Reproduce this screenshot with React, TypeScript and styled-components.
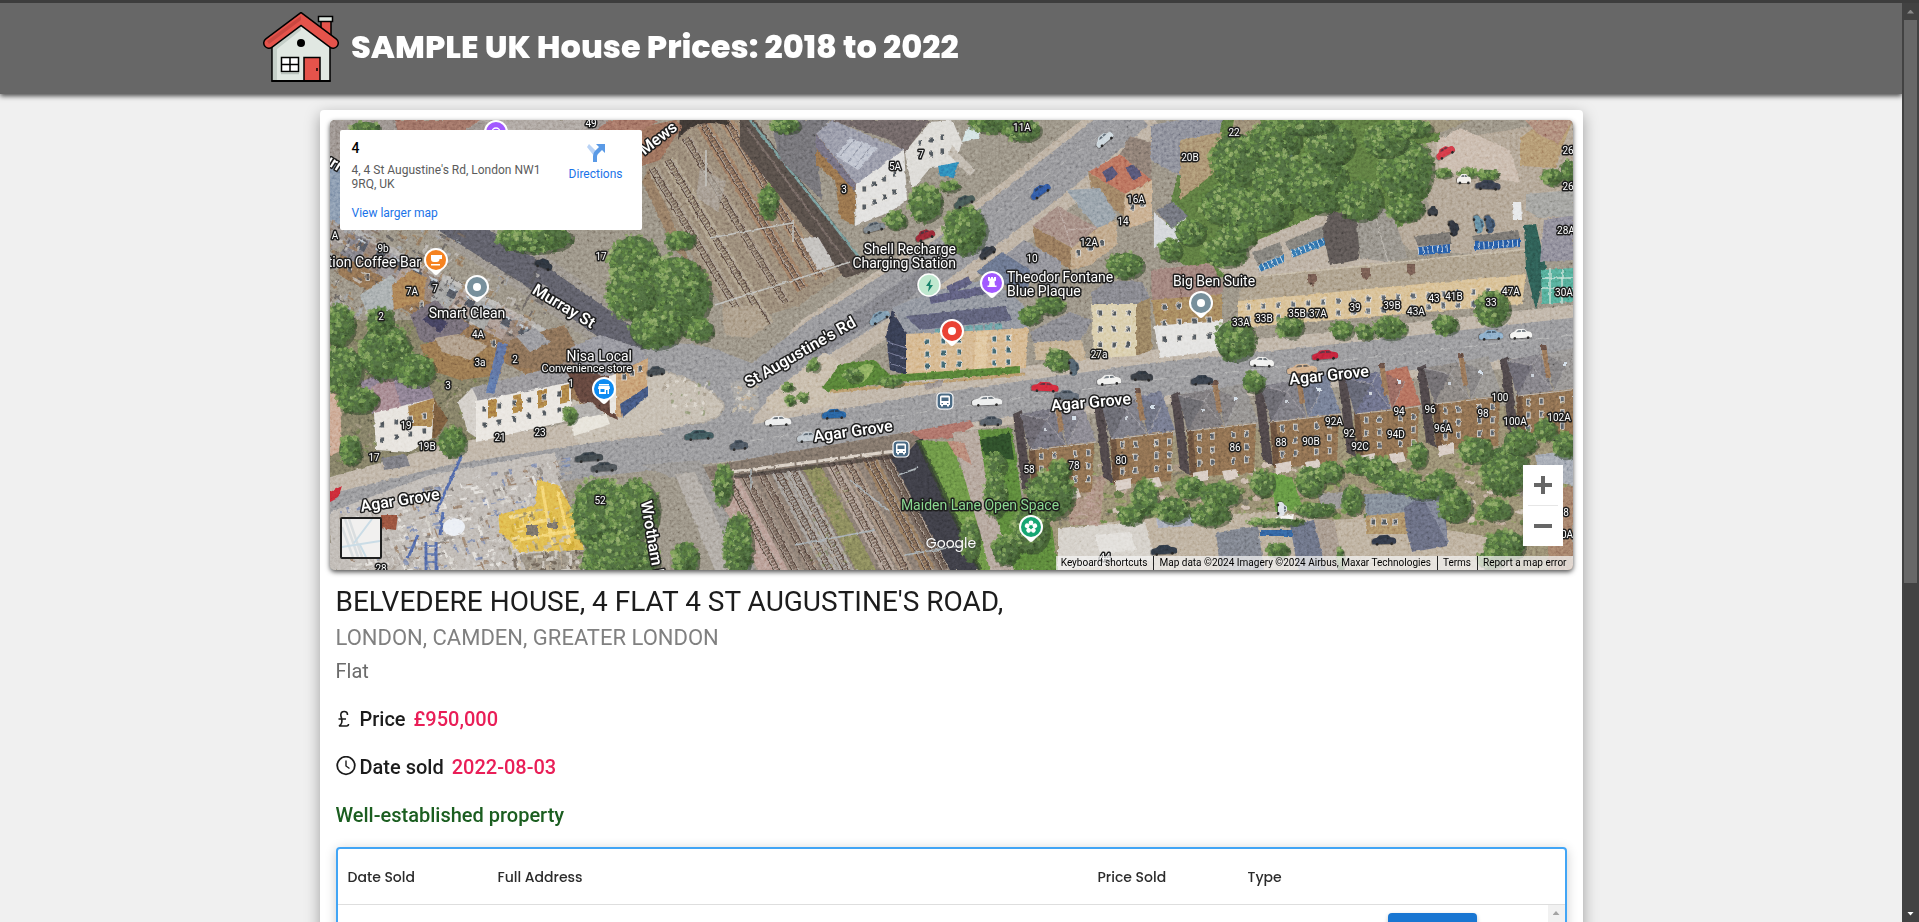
import React from "react";
import styled, { createGlobalStyle } from "styled-components";

const GlobalStyle = createGlobalStyle`
  *, *::before, *::after { box-sizing: border-box; }
  body {
    margin: 0;
    background: #f0f0f0;
    color: #1c1c1c;
    font-family: Roboto, "Liberation Sans", sans-serif;
  }
  h1, h2, h3, p { margin: 0; font-weight: 400; }
`;

const headingFont = `Poppins, Inter, "Liberation Sans", sans-serif`;

/* ---------- page frame ---------- */

const Frame = styled.div`
  display: flex;
  height: 100vh;
  overflow: hidden;
  border-top: 3px solid #3d3d3d;
`;

const Page = styled.div`
  flex: 1;
  min-width: 0;
  overflow: hidden;
`;

const Header = styled.header`
  position: relative;
  padding-bottom: 3px;
  background: #676767;
  box-shadow: 0 2px 5px rgba(0, 0, 0, 0.7);
`;

const HeaderInner = styled.div`
  display: flex;
  align-items: center;
  gap: 12px;
  max-width: 1376px;
  height: 88px;
  margin: 0 auto;
`;

const SiteTitle = styled.h1`
  color: #fff;
  font-family: ${headingFont};
  font-size: 32px;
  font-weight: 800;
  line-height: 48px;
`;

const Card = styled.main`
  max-width: 1263px;
  margin: 16px auto 0;
  padding: 10px;
  background: #fff;
  border-radius: 4px;
  box-shadow: 0 5px 15px rgba(0, 0, 0, 0.35);
`;

/* ---------- window scrollbar ---------- */

const Scrollbar = styled.div`
  display: flex;
  flex-direction: column;
  align-items: center;
  width: 17px;
  background: #424242;
`;

const Arrow = styled.i<{ $up?: boolean; $color: string }>`
  width: 7px;
  height: 4px;
  background: ${(p) => p.$color};
  clip-path: ${(p) => (p.$up ? "polygon(50% 0, 100% 100%, 0 100%)" : "polygon(0 0, 100% 0, 50% 100%)")};
`;

const ArrowBox = styled.div`
  display: flex;
  align-items: center;
  justify-content: center;
  width: 17px;
  height: 17px;
`;

const ScrollTrack = styled.div`
  flex: 1;
`;

const ScrollThumb = styled.div`
  width: 13px;
  height: 63.6%;
  background: #686868;
`;

/* ---------- map chrome ---------- */

const MapFrame = styled.section`
  position: relative;
  height: 450px;
  overflow: hidden;
  border-radius: 5px;
`;

const MapShadow = styled.div`
  border-radius: 5px;
  box-shadow: 0 2px 5px rgba(0, 0, 0, 0.7);
`;

const MapCanvas = styled.svg`
  display: block;
  width: 100%;
  height: 100%;
`;

const Grain = styled.rect`
  mix-blend-mode: overlay;
`;

const PlaceCard = styled.div`
  position: absolute;
  top: 10px;
  left: 10px;
  display: flex;
  justify-content: space-between;
  width: 302px;
  height: 100px;
  padding: 10px 12px;
  background: #fff;
  border-radius: 2px;
  font-size: 12px;
  line-height: 14px;
`;

const PlaceInfo = styled.div`
  width: 200px;
`;

const PlaceName = styled.h2`
  color: #000;
  font-size: 14px;
  font-weight: 500;
  line-height: 16px;
`;

const PlaceAddress = styled.p`
  margin: 7px 0 15px;
  color: #5b5b5b;
`;

const MapLink = styled.a`
  color: #1a73e8;
  text-decoration: none;
`;

const DirectionsLink = styled(MapLink)`
  display: flex;
  flex-direction: column;
  align-items: center;
  gap: 5px;
  padding: 4px 7px 0;
`;

const ZoomControls = styled.div`
  position: absolute;
  right: 10px;
  bottom: 24px;
  display: flex;
  flex-direction: column;
  align-items: center;
  width: 40px;
  background: #fff;
`;

const ZoomButton = styled.button`
  display: flex;
  align-items: center;
  justify-content: center;
  width: 40px;
  height: 40px;
  padding: 0;
  border: 0;
  background: none;
`;

const ZoomDivider = styled.div`
  width: 30px;
  height: 1px;
  background: #e6e6e6;
`;

const LayerButton = styled.button`
  position: absolute;
  left: 10px;
  bottom: 11px;
  width: 42px;
  height: 42px;
  padding: 0;
  border: 2px solid #1f1f1f;
  border-radius: 2px;
  background: #f1f0ef;
  overflow: hidden;
`;

const Attribution = styled.div`
  position: absolute;
  right: 0;
  bottom: 0;
  display: flex;
  background: rgba(245, 245, 245, 0.72);
  color: #000;
  font-size: 10px;
  line-height: 14px;
  white-space: nowrap;
`;

const AttributionItem = styled.span`
  padding: 0 6px 0 5px;
  & + & { border-left: 1px solid #222; }
`;

const AttributionButton = styled.button`
  padding: 0;
  border: 0;
  background: none;
  color: inherit;
  font: inherit;
`;

const AttributionLink = styled.a`
  color: inherit;
  text-decoration: none;
`;

const GoogleMark = styled.div`
  position: absolute;
  left: 50%;
  bottom: 18px;
  transform: translateX(-50%);
  color: #fff;
  font-family: ${headingFont};
  font-size: 14px;
  line-height: 18px;
  text-shadow: 0 0 2px #333;
`;

/* ---------- property details ---------- */

const Details = styled.section`
  padding: 16px 6px;
`;

const Address = styled.h2`
  font-size: 28px;
  line-height: 32px;
`;

const Area = styled.h3`
  margin-top: 8px;
  color: #808080;
  font-size: 22px;
  line-height: 24px;
`;

const Kind = styled.p`
  margin-top: 9px;
  color: #6b6b6b;
  font-size: 20px;
  line-height: 24px;
`;

const Fact = styled.p<{ $color?: string }>`
  display: flex;
  align-items: center;
  height: 24px;
  margin-top: 24px;
  color: ${(p) => p.$color || "#1c1c1c"};
  font-size: 20px;
  font-weight: 500;
  line-height: 24px;
`;

const FactIcon = styled.span`
  display: flex;
  width: 24px;
`;

const FactValue = styled.span`
  margin-left: 8px;
  color: #e91e57;
`;

const TableBox = styled.div`
  height: 420px;
  margin-top: 20px;
  border: 2px solid #42a5f5;
  border-radius: 4px;
  box-shadow: 0 2px 12px rgba(0, 0, 0, 0.2);
`;

const HeadTable = styled.table`
  width: 100%;
  table-layout: fixed;
  border-collapse: collapse;
  border-bottom: 1px solid #dedede;
`;

const HeadCell = styled.th<{ $width?: number }>`
  width: ${(p) => (p.$width ? p.$width + "px" : "auto")};
  height: 55px;
  padding: 2px 10px 0;
  color: #2b2b2b;
  font-family: ${headingFont};
  font-size: 14px;
  font-weight: 500;
  text-align: left;
`;

const TableBody = styled.div`
  display: flex;
  height: 360px;
`;

const Row = styled.div`
  flex: 1;
  display: flex;
  justify-content: flex-end;
  align-items: flex-start;
  padding: 8px 71px 0 0;
`;

const DetailButton = styled.button`
  width: 89px;
  height: 38px;
  border: 0;
  border-radius: 4px;
  background: #1976d2;
  box-shadow: 0 2px 4px rgba(0, 0, 0, 0.25);
`;

const InnerScrollbar = styled.div`
  width: 17px;
  background: #f1f1f1;
`;

/* ---------- aerial drawing ---------- */

const rng = (seed: number) => () => {
  seed = (seed * 16807) % 2147483647;
  return seed / 2147483647;
};

const leafShade = ["#34492a", "#3d5530", "#465f36"];
const leafLight = ["#56753c", "#648546", "#739352", "#4f6d39", "#86a362"];

const Tree = ({ x, y, rx, ry }: { x: number; y: number; rx: number; ry: number }) => {
  const r = rng(Math.round(x * 91 + y * 37 + rx * 13 + 7));
  r();
  const count = Math.round((rx * ry) / 4) + 14;
  return (
    <g>
      <ellipse cx={x + 2} cy={y + 2} rx={rx * 0.95} ry={ry * 0.95} fill="#2c3a26" opacity={0.55} />
      <ellipse cx={x} cy={y} rx={rx * 0.9} ry={ry * 0.9} fill="#48643a" />
      {Array.from({ length: count }, (_, i) => {
        const a = r() * 6.283;
        const d = Math.sqrt(r());
        const px = Math.cos(a) * d;
        const py = Math.sin(a) * d;
        const shades = px + py + (r() - 0.5) * 1.4 > 0.35 ? leafShade : leafLight;
        return (
          <circle
            key={i}
            cx={x + px * rx}
            cy={y + py * ry}
            r={0.8 + r() * 1.8}
            fill={shades[Math.floor(r() * shades.length)]}
            opacity={0.75}
          />
        );
      })}
    </g>
  );
};

const trees = [
  [12, 250, 22, 26], [8, 205, 18, 22], [55, 232, 28, 30], [85, 250, 22, 18], [28, 280, 22, 14], [50, 200, 14, 14],
  [205, 118, 40, 16], [305, 145, 28, 32], [345, 175, 38, 42], [300, 175, 26, 26], [325, 210, 28, 20], [350, 120, 16, 10], [370, 210, 14, 12],
  [35, 8, 16, 7], [122, 322, 15, 16], [20, 330, 12, 16], [240, 295, 7, 9],
  [270, 395, 30, 40], [305, 390, 26, 32], [290, 440, 42, 26], [355, 440, 14, 20],
  [393, 365, 10, 22], [408, 425, 16, 34],
  [595, 83, 18, 20], [635, 110, 23, 26], [660, 0, 24, 14], [692, 10, 20, 12], [620, 66, 10, 6], [438, 82, 10, 18], [455, 5, 16, 9], [565, 100, 12, 10],
  [905, 40, 26, 30], [945, 20, 28, 22], [950, 62, 30, 30], [900, 85, 32, 22], [990, 62, 30, 34], [930, 92, 34, 20], [1000, 24, 26, 22], [1030, 80, 24, 22],
  [1075, 50, 30, 34], [1055, 20, 24, 18], [1075, 88, 20, 14], [975, 5, 30, 10], [1080, 8, 24, 10], [895, 132, 24, 16], [860, 112, 16, 14], [905, 118, 22, 14], [840, 130, 12, 12],
  [1113, 53, 9, 5], [1138, 53, 10, 5], [1157, 55, 12, 6], [1222, 57, 12, 9], [1238, 50, 8, 12],
  [795, 145, 20, 14], [720, 185, 16, 10], [700, 195, 12, 10],
  [1162, 188, 19, 19], [960, 207, 14, 12], [1012, 210, 12, 10], [1060, 208, 18, 12], [905, 220, 22, 22], [1115, 205, 14, 10], [1035, 212, 10, 8],
  [460, 280, 6, 5], [458, 267, 6, 4], [473, 277, 5, 5], [484, 245, 6, 7], [728, 240, 14, 12], [523, 255, 10, 8], [560, 262, 14, 5],
  [666, 345, 11, 13], [665, 375, 12, 24], [720, 375, 26, 26], [700, 410, 20, 24], [675, 430, 14, 16], [640, 420, 10, 22], [730, 350, 12, 10],
  [923, 262, 12, 11], [860, 368, 16, 12], [890, 375, 22, 14], [932, 363, 13, 14], [880, 395, 22, 12],
  [980, 362, 16, 16], [1000, 352, 14, 12], [1028, 345, 14, 10], [1050, 350, 18, 14], [1070, 362, 22, 12], [1088, 335, 10, 14],
  [1110, 362, 16, 12], [1095, 370, 24, 10], [1125, 385, 18, 18], [1175, 350, 26, 26], [1145, 330, 18, 14], [1190, 322, 18, 14], [1215, 310, 12, 12], [1235, 325, 14, 14],
  [1165, 390, 18, 12], [1175, 425, 22, 16], [1160, 440, 14, 10], [1022, 380, 12, 16], [985, 390, 22, 8], [945, 402, 30, 4], [815, 378, 14, 20], [800, 395, 14, 10], [842, 390, 18, 14], [1010, 440, 4, 14], [948, 430, 12, 8],
];

/* A pair of hipped Victorian houses seen from the rear, with its shaded gap on the left. */
const VillaPair = ({ x, y, w, roof, roof2 }: { x: number; y: number; w: number; roof: string; roof2: string }) => (
  <g transform={`translate(${x} ${y})`}>
    <path d="M-7 6 L2 2 L12 86 L2 80Z" fill="#474142" />
    <path d={`M9 40 L${w} 34 L${w - 2} 84 L13 88Z`} fill="#806549" />
    <path d="M9 40 L15 41 L19 88 L12 86Z" fill="#5f4a38" />
    <path d="M0 6 L34 0 L46 37 L10 42Z" fill={roof} />
    <path d="M0 6 L26 12 L10 42Z" fill="#55535a" opacity={0.6} />
    <path d={`M38 0 L${w - 12} -6 L${w + 2} 33 L47 37Z`} fill={roof2} />
    <path d="M38 0 L60 10 L47 37Z" fill="#5b5960" opacity={0.4} />
    <path d="M0 6 L26 12 L46 37 M26 12 L34 0 M60 10 L47 37" stroke="#a3a0a2" strokeWidth={0.7} fill="none" opacity={0.7} />
    <path d="M34 -9 l5 0 l5 32 l-5 1z" fill="#8a6a50" />
    <path d="M34 -9 l5 0 l1 5 l-6 0z" fill="#5f4a3f" />
    <path d={`M10 42 L47 38 L${w + 2} 34`} stroke="#b7aca0" strokeWidth={1} fill="none" />
    {[0, 1, 2].map((row) =>
      [19, 32, 53, 66].map((c) => (
        <g key={row + "-" + c}>
          <rect x={c} y={46 - c / 14 + row * 13} width={4.6} height={7} fill="#d2ccc3" />
          <rect x={c + 0.8} y={47 - c / 14 + row * 13} width={3} height={5} fill="#515860" />
        </g>
      ))
    )}
    <path d="M14 84 l16 -3 l0 10 l-15 3z M44 82 l14 -2 l3 9 l-14 3z" fill="#d3c6bd" />
    <rect x={w - 22} y={8} width={4} height={4} fill="#cfdbe6" />
    <rect x={24} y={20} width={3} height={3} fill="#c5ccd4" />
  </g>
);

const Facade = ({ x, y, cols, rows, dx, dy, skew = 0, fill = "#4b5157", frame = "#e6e2da" }: {
  x: number; y: number; cols: number; rows: number; dx: number; dy: number; skew?: number; fill?: string; frame?: string;
}) => (
  <g>
    {Array.from({ length: cols * rows }, (_, i) => {
      const c = i % cols;
      const r = Math.floor(i / cols);
      return <rect key={i} x={x + c * dx} y={y + r * dy + c * skew} width={4.6} height={6} fill={fill} stroke={frame} strokeWidth={0.8} />;
    })}
  </g>
);

const Tracks = ({ lines, dx, dy }: { lines: [number, number, string][]; dx: number; dy: number }) => (
  <g>
    {lines.map(([x, y, c], i) => (
      <g key={i}>
        <path d={`M${x} ${y} l${dx} ${dy}`} stroke={c} strokeWidth={13} />
        <path d={`M${x} ${y} l${dx} ${dy}`} stroke="#5d5047" strokeWidth={7} strokeDasharray="1.8 1.4" opacity={0.75} />
        <path d={`M${x - 2.6} ${y + 1} l${dx} ${dy} M${x + 2.6} ${y - 1} l${dx} ${dy}`} stroke="#4a3b34" strokeWidth={1.7} />
        <path d={`M${x - 2} ${y + 1} l${dx} ${dy} M${x + 3.2} ${y - 1} l${dx} ${dy}`} stroke="#c9beb2" strokeWidth={0.7} />
      </g>
    ))}
  </g>
);

const Car = ({ x, y, a, c, l = 22 }: { x: number; y: number; a: number; c: string; l?: number }) => (
  <g transform={`translate(${x} ${y}) rotate(${a})`}>
    <rect x={-l / 2 - 1} y={-2} width={l + 1} height={7} rx={3} fill="#333" opacity={0.5} />
    <path d={`M${-l / 2} 0 q1 -2 ${l / 5} -2.500 l${l / 8} -2.500 h${l / 3} l${l / 8} 2.500 q${l / 5} 0 ${l / 4.6} 3 v2 q0 1.500 -1.500 1.500 h${-l + 3} q-1.500 0 -1.500 -1.500z`} fill={c} />
    <path d={`M${-l / 4.5} -2 l${l / 10} -2 h${l / 8} v2z M${l / 20} -2 v-2 h${l / 9} l${l / 12} 2z`} fill="#27313b" opacity={0.7} />
    <circle cx={-l / 3.4} cy={4} r={1.4} fill="#222" />
    <circle cx={l / 3.2} cy={4} r={1.4} fill="#222" />
  </g>
);

const cars: [number, number, number, string, number?][] = [
  [448, 301, -3, "#eceded", 26], [504, 294, -3, "#245a96", 24], [478, 317, -5, "#b9c2c9", 22], [409, 325, -6, "#47505a", 18],
  [657, 281, -2, "#eceded", 30], [715, 267, 2, "#cf2636", 27], [737, 275, 2, "#59616b", 24], [661, 301, -2, "#4f565e", 22],
  [779, 260, -4, "#f0f0ee", 24], [812, 256, 2, "#33373d", 22], [932, 242, 2, "#f0f0ee", 24], [872, 260, -3, "#333a44", 22],
  [995, 235, -5, "#bd2036", 26], [972, 249, -4, "#d0a880", 30], [1161, 215, -3, "#7da3c4", 24], [1191, 214, -3, "#f4f4f2", 22],
  [369, 315, -4, "#3a5155", 29], [259, 337, -5, "#3b4246", 28], [274, 347, -4, "#454a4e", 26], [326, 251, -8, "#3e4448", 18],
  [710, 71, -35, "#2b5097", 22], [634, 81, -25, "#3f4f4c", 22], [774, 19, -40, "#c7d3da", 20], [595, 115, -20, "#8d2430", 20],
  [544, 107, -15, "#70777c", 22], [549, 197, -30, "#7390a8", 22], [657, 132, -35, "#30343b", 18], [214, 144, 20, "#2a3038", 18],
  [1115, 32, -30, "#cf3440", 20], [1158, 65, 2, "#353a46", 25], [1103, 91, 3, "#33373d", 10], [1134, 59, 0, "#f1eeea", 14],
  [1124, 108, 75, "#2c3038", 16], [1149, 104, 78, "#5c829a", 18], [1160, 104, 78, "#3c4f66", 18], [744, 247, 80, "#4c5b66", 17],
  [834, 430, -4, "#2c3540", 26], [1054, 420, -2, "#2d3442", 24], [952, 389, 88, "#d8dde4", 14],
];

const numbers: [string, number, number][] = [
  ["49", 261, 3], ["A", 5, 115], ["9b", 53, 128], ["7A", 82, 171], ["7", 105, 168], ["2", 51, 196], ["4A", 148, 214], ["17", 271, 136],
  ["11A", 692, 7], ["7", 591, 34], ["5A", 565, 46], ["3", 514, 69], ["16A", 806, 79], ["14", 793, 101], ["12A", 759, 122], ["10", 702, 138],
  ["22", 904, 12], ["20B", 860, 37], ["26", 1238, 30], ["26", 1238, 66], ["28A", 1236, 110], ["30A", 1234, 172], ["47A", 1181, 171],
  ["33", 1161, 182], ["41B", 1124, 176], ["43", 1104, 178], ["43A", 1086, 191], ["39B", 1062, 185], ["39", 1025, 187], ["37A", 988, 193],
  ["35B", 967, 193], ["33B", 934, 198], ["33A", 911, 202], ["3a", 150, 242], ["2", 185, 239], ["3", 118, 265], ["19", 76, 305],
  ["21", 170, 317], ["23", 210, 312], ["19B", 97, 326], ["17", 44, 337], ["1", 241, 263], ["52", 270, 380], ["28", 51, 448],
  ["27a", 769, 234], ["58", 699, 349], ["78", 744, 345], ["80", 791, 340], ["44", 775, 437], ["86", 905, 327], ["88", 951, 322],
  ["90B", 981, 321], ["92A", 1004, 301], ["92", 1019, 313], ["92C", 1030, 326], ["94", 1069, 291], ["94D", 1066, 314], ["96", 1100, 289],
  ["96A", 1113, 308], ["98", 1153, 293], ["100", 1170, 277], ["100A", 1185, 301], ["102A", 1229, 297], ["8", 1236, 392], ["0A", 1237, 414],
];

const MapText = styled.text<{ $size: number; $weight?: number; $fill?: string }>`
  font-family: Roboto, sans-serif;
  font-size: ${(p) => p.$size}px;
  font-weight: ${(p) => p.$weight || 400};
  fill: ${(p) => p.$fill || "#fff"};
  stroke: #1d1d1d;
  stroke-width: 3px;
  stroke-linejoin: round;
  paint-order: stroke;
  dominant-baseline: central;
`;

const streets: [string, number, number, number][] = [
  ["Murray St", 234, 186, 31], ["Mews", 328, 18, -38], ["urr", 3, 42, 32], ["Agar Grove", 523, 311, -8], ["Agar Grove", 761, 282, -5],
  ["Agar Grove", 999, 255, -6], ["Agar Grove", 70, 380, -9], ["St Augustine's Rd", 470, 232, -30], ["Wrotham R", 323, 420, 80],
];

const places: [string, number, number, "start" | "middle" | "end", number?, string?][] = [
  ["tion Coffee Bar", 91, 142, "end"], ["Smart Clean", 137, 193, "middle"], ["Shell Recharge", 626, 129, "end"], ["Charging Station", 626, 143, "end"],
  ["Theodor Fontane", 677, 157, "start"], ["Blue Plaque", 677, 171, "start"], ["Big Ben Suite", 884, 161, "middle"],
  ["Nisa Local", 302, 236, "end"], ["Convenience store", 302, 248, "end", 11], ["Maiden Lane Open Space", 650, 385, "middle", 14, "#8bd891"],
];

const Pin = ({ x, y, color, children }: { x: number; y: number; color: string; children?: React.ReactNode }) => (
  <g transform={`translate(${x} ${y})`}>
    <path d="M-12 0 a12 12 0 1 1 24 0 c0 5 -3 8 -7 11 l-3 3 q-2 2 -4 0 l-3 -3 c-4 -3 -7 -6 -7 -11z" fill="#fff" />
    <circle r={10} fill={color} />
    {children}
  </g>
);

const BusStop = ({ x, y }: { x: number; y: number }) => (
  <g transform={`translate(${x} ${y})`}>
    <rect x={-8} y={-8} width={16} height={16} rx={4} fill="#4a6a84" stroke="#fff" strokeWidth={1.2} />
    <path d="M-5 -4 q0 -1.500 1.500 -1.500 h7 q1.500 0 1.500 1.500 v8 h-1 v1.500 h-2 v-1.500 h-4 v1.500 h-2 v-1.500 h-1z" fill="#fff" />
    <path d="M-3.500 -3.500 h7 v3.500 h-7z M-3.500 2 h1.500 v1 h-1.500z M2 2 h1.500 v1 h-1.500z" fill="#4a6a84" />
  </g>
);

const TerraceRoofs = () => {
  const r = rng(4242);
  const roofColors = ["#77757b", "#8a8487", "#6a686e", "#a08d84", "#9a9a98", "#85756c"];
  return (
    <g>
      {Array.from({ length: 15 }, (_, i) => {
        const x = 16 + i * 18;
        const y = 112 + i * 9.500;
        if (x > 262) return null;
        return (
          <g key={i} transform={`translate(${x} ${y})`}>
            <path d="M-6 22 L8 -4 L34 8 L22 38Z" fill={roofColors[Math.floor(r() * 6)]} />
            <path d="M-6 22 L22 38 L20 58 L-8 42Z" fill="#85684c" />
            <path d="M8 -4 L34 8 L32 12 L6 1Z" fill="#c2bfbb" opacity={0.6} />
            <path d="M34 8 L22 38" stroke="#4d4a4c" strokeWidth={1.2} />
            <rect x={2} y={32} width={3.5} height={7} fill="#454a50" stroke="#d8d2c8" strokeWidth={0.8} />
            <rect x={12} y={38} width={3.5} height={7} fill="#454a50" stroke="#d8d2c8" strokeWidth={0.8} />
            <path d="M14 8 l8 4 l-4 8 l-8 -4z" fill="#4b5059" />
            <path d="M12 6 l8 4 l-1 2 l-8 -4z" fill="#b9c4cf" />
          </g>
        );
      })}
    </g>
  );
};

/* Small skewed chips that break up a large flat area. */
const Chips = ({ seed, n, x, y, w, h, colors, angle, size = 8, opacity = 0.6 }: {
  seed: number; n: number; x: number; y: number; w: number; h: number; colors: string[]; angle: number; size?: number; opacity?: number;
}) => {
  const r = rng(seed);
  r();
  return (
    <g opacity={opacity}>
      {Array.from({ length: n }, (_, i) => {
        const px = x + r() * w;
        const py = y + r() * h;
        const turn = r() > 0.5 ? angle : angle + 90;
        return (
          <rect
            key={i} x={px} y={py} width={1.500 + r() * size} height={1 + r() * 2.500}
            transform={`rotate(${turn} ${px} ${py})`} fill={colors[Math.floor(r() * colors.length)]}
          />
        );
      })}
    </g>
  );
};

const Rubble = () => {
  const r = rng(777);
  const c = ["#d9d6d1", "#b9b2ab", "#9b938c", "#8a6f5b", "#c9c6c2", "#76706b", "#e8e5e0", "#6d7da8", "#d0ccc6", "#a79d94"];
  return (
    <g>
      {Array.from({ length: 900 }, (_, i) => {
        const y = 335 + r() * 115;
        const x = r() * 232 + (y - 335) * 0.16;
        const w = 1.500 + r() * 9;
        const h = 0.8 + r() * 2.6;
        const turn = r() > 0.5 ? -10 : 68;
        const fill = c[Math.floor(r() * c.length)];
        if (y < 388 - x * 0.22) return null;
        return <rect key={i} x={x} y={y} width={w} height={h} transform={`rotate(${turn} ${x} ${y})`} fill={fill} opacity={0.85} />;
      })}
    </g>
  );
};

const gardenPatches = (() => {
  const r = rng(991);
  r();
  const c = ["#7c8a55", "#a08a78", "#5b7a3c", "#c4aa9b", "#6f6a5f", "#8b7c66", "#4d6636", "#d6c2b6"];
  return Array.from({ length: 420 }, (_, i) => (
    <ellipse key={i} cx={700 + r() * 543} cy={345 + r() * 60} rx={1.500 + r() * 5} ry={1 + r() * 3} fill={c[Math.floor(r() * c.length)]} opacity={0.8} />
  ));
})();

const Terrain = () => (
  <g>
    <rect width={1243} height={450} fill="#8e8679" />

    {/* open ground and gardens */}
    <path d="M0 200 L120 200 L190 300 L120 350 L0 360Z" fill="#77735c" />
    <Chips seed={31} n={260} x={0} y={190} w={150} h={150} angle={30} colors={["#5b6b3c", "#8c7f6a", "#494c3a", "#a39480", "#6f7f4a"]} />
    <path d="M860 0 H1110 V60 L1060 120 L880 160 L830 130Z" fill="#55703a" />
    <path d="M1085 25 L1243 0 V140 L1080 130 L1060 112 L1100 90Z" fill="#a99b89" />
    <path d="M1105 22 L1130 8 L1180 30 L1190 62 L1110 52Z" fill="#c4b3a4" />
    <path d="M880 140 L1000 90 L1060 130 L1060 150 L905 165Z" fill="#b3a697" />
    <path d="M690 330 L1243 280 V450 H700Z" fill="#8c8168" />
    {gardenPatches}
    <path d="M815 398 L945 392 L1000 400 L1040 398 L1180 420 V450 H720 L760 405Z" fill="#b5a793" />

    {/* railway cutting, north */}
    <path d="M345 0 H420 L530 142 L470 185 L405 205 L375 160 L315 50Z" fill="#8c7c6c" />
    <Tracks dx={100} dy={165} lines={[[322, 48, "#9d8f7c"], [338, 40, "#a59780"], [356, 18, "#9b8a78"], [373, 4, "#94735c"], [391, -8, "#9a7a63"], [406, -20, "#8f7a68"]]} />
    <path d="M318 50 L338 90 L360 142 L345 130 L312 62Z" fill="#876f5a" />
    <path d="M410 0 L424 0 L540 150 L515 158 L410 26Z" fill="#4f4643" />
    <path d="M416 6 L524 152" stroke="#6a5f5a" strokeWidth={2} />
    <path d="M420 0 L536 146" stroke="#6d9190" strokeWidth={2.500} />
    <path d="M370 48 L396 62 L388 92 L366 78Z" fill="#a39d92" opacity={0.6} />
    <path d="M380 118 L462 103 M385 185 L520 142 M463 100 V122 M376 30 V66" stroke="#b9b9b4" strokeWidth={1.500} fill="none" />
    <path d="M470 118 L488 117 L505 145 L488 150Z" fill="#bcb9b5" />
    <path d="M348 20 Q365 -4 400 6 L396 -2 H350Z" fill="#39322f" />
    <path d="M250 20 L345 0 L352 6 L330 40 L300 50Z" fill="#8f6653" />
    <path d="M392 188 L428 185 L438 205 L420 218 L395 215Z" fill="#a1917c" />

    {/* roads */}
    <g fill="none" strokeLinejoin="round">
      <path d="M440 290 L490 225 L590 160 L690 88 L770 25 L815 -12" stroke="#b5a898" strokeWidth={62} />
      <path d="M110 95 L200 152 L300 222 L360 262" stroke="#8f8880" strokeWidth={44} />
      <path d="M-20 392 L120 352 L260 328 L420 312 L600 287 L821 258 L1000 240 L1260 211" stroke="#b8ac9d" strokeWidth={56} />
      <path d="M110 95 L200 152 L300 222 L360 262" stroke="#57575e" strokeWidth={28} />
      <path d="M-20 396 L120 362 L260 340 L420 322 L600 291 L821 260 L1000 242 L1260 213" stroke="#8d8d90" strokeWidth={34} />
      <path d="M390 305 L420 270 L490 217 L590 155 L690 83 L770 20 L805 -10" stroke="#8a8a8e" strokeWidth={40} />
      <path d="M480 232 L600 153" stroke="#6f6f75" strokeWidth={18} opacity={0.7} />
      <path d="M420 321 L600 291 L821 260 L1000 242 L1260 213" stroke="#adadad" strokeWidth={1} strokeDasharray="14 10" />
      <path d="M500 205 L600 140 L700 68 L790 0" stroke="#aaaaaa" strokeWidth={0.8} strokeDasharray="8 12" />
    </g>
    <path d="M300 235 Q350 212 400 235 L440 250 L420 310 L340 318 L300 290Z" fill="#8d8d90" />
    <path d="M238 282 L330 250 Q378 262 394 285 Q396 300 360 304 L250 325 L240 312Z" fill="#beb5a7" />
    <path d="M330 250 Q378 262 394 285 Q396 300 360 304" fill="none" stroke="#a29a8e" strokeWidth={1.500} />
    <path d="M440 275 Q470 250 495 232 L520 250 L505 285 L445 293 Q430 285 440 275Z" fill="#c1b4a1" />
    <path d="M400 262 L425 258 L430 290 L408 292Z" fill="#a8a59f" opacity={0.6} />
    <Chips seed={55} n={26} x={402} y={262} w={22} h={28} angle={15} size={4} colors={["#d4c39f", "#e6e1d8", "#c9ad86"]} />
    <Chips seed={57} n={30} x={335} y={258} w={46} h={34} angle={15} size={4} colors={["#6b7d4e", "#e6e1d8", "#8c7f6c"]} />
    <path d="M580 312 L640 300 L644 306 L622 318 L582 320Z" fill="#a3685e" />

    {/* railway, south */}
    <path d="M375 352 L588 322 L664 450 H428Z" fill="#7c7167" />
    <path d="M375 352 L412 348 L470 450 H428Z" fill="#b0938a" />
    <Tracks dx={62} dy={116} lines={[[400, 362, "#b0938a"], [414, 354, "#8a7a70"], [430, 350, "#83746a"], [446, 348, "#9a9590"], [461, 346, "#a09b96"], [500, 340, "#a8968a"], [516, 338, "#9a8474"], [537, 335, "#8a6f56"], [553, 333, "#6b5d54"]]} />
    <path d="M472 346 L490 344 L546 450 H526Z" fill="#7b7c52" />
    <Chips seed={81} n={90} x={480} y={350} w={40} h={98} angle={60} size={5} colors={["#8f9460", "#a3836a", "#5c6b3b", "#b39c86"]} opacity={0.45} />
    <path d="M558 332 L592 318 L664 450 H620Z" fill="#38383f" />
    <path d="M370 348 L440 335 L578 312 L590 318 L578 332 L401 358 L371 360Z" fill="#756a61" />
    <path d="M401 352 L574 330" stroke="#d6cbbe" strokeWidth={3} strokeDasharray="20 2" />
    <path d="M405 357 L574 335" stroke="#3c3432" strokeWidth={4} opacity={0.7} />
    <path d="M465 425 L545 410 M575 435 L665 420 M421 350 V370 M520 360 L560 392 M568 355 L588 348" stroke="#9da6ab" strokeWidth={1.500} />

    {/* park and footpath */}
    <path d="M588 320 L622 322 L642 380 L662 450 H650Z" fill="#64893f" />
    <path d="M622 312 L650 310 L668 400 L684 450 H660Z" fill="#ab9b90" />
    <path d="M648 310 L682 308 L692 380 L722 407 L728 450 H684 L660 380Z" fill="#527a36" />
    <path d="M650 320 L680 312 L684 340 L655 335Z" fill="#2c4726" />
    <path d="M617 321 L634 322 L642 345 L625 335Z" fill="#b07d6e" />
    <path d="M588 320 L650 450" stroke="#2e3d26" strokeWidth={5} opacity={0.7} />

    {/* road, verge and wall beside the southern line, west bank */}
    <path d="M310 345 L370 340 L425 450 H395 L350 360Z" fill="#8d8a87" />
    <path d="M345 354 L365 352 L410 450 H385Z" fill="#a7a19a" />

    {/* north-west terraces */}
    <path d="M0 0 H330 L240 40 L0 130Z" fill="#8f8681" />
    <path d="M65 0 L150 0 L130 14 L70 22Z" fill="#93685b" />
    <path d="M280 0 L330 0 L280 30 L260 14Z" fill="#9a6a5c" />
    <path d="M150 0 L260 0 L255 10 L190 14Z" fill="#a39b95" />
    <path d="M0 40 L14 48 L10 105 L0 100Z" fill="#7c8ea6" />
    <TerraceRoofs />
    <Chips seed={12} n={240} x={0} y={100} w={130} h={90} angle={28} colors={["#c3beb9", "#4c4a4c", "#8a6a4d", "#9aa0a8", "#6c5d50"]} opacity={0.7} />
    <Chips seed={14} n={90} x={130} y={150} w={90} h={70} angle={28} colors={["#c3beb9", "#4c4a4c", "#8a6a4d", "#9aa0a8"]} opacity={0.6} />
    <path d="M30 175 L60 155 L75 168 L62 190 L36 190Z" fill="#9fa5a6" />
    <path d="M62 165 L82 150 L96 158 L94 180 L64 190Z" fill="#a1764e" />
    <path d="M80 195 L105 180 L140 205 L115 228 L90 220Z" fill="#6b636c" />
    <path d="M92 200 L102 192 L118 203 L110 212Z" fill="#3c3a55" />

    {/* white villas along Agar Grove */}
    <path d="M90 225 L130 215 L175 232 L170 255 L130 260 L100 250Z" fill="#8d6d4a" />
    <path d="M104 218 L128 214 L158 226 L140 240 L112 232Z" fill="#a5917c" />
    <path d="M180 220 L235 205 L250 235 L215 252 L178 245Z" fill="#7d6650" />
    <path d="M186 216 L205 208 L220 222 L200 232Z" fill="#8d8d92" />
    <path d="M30 262 L60 250 L92 248 L105 280 L70 290 L42 294Z" fill="#7e7383" />
    <path d="M38 270 L62 255 L72 290 L44 294Z" fill="#9b7b83" />
    <path d="M92 248 L105 280 L118 300 L106 318 L102 318 L104 278Z" fill="#6d5238" />
    <path d="M44 293 L104 278 L102 318 L80 332 L46 330Z" fill="#e4e0da" />
    <path d="M78 286 L104 278 L102 306 L80 306Z" fill="#a0794c" />
    <Facade x={50} y={302} cols={4} rows={2} dx={14} dy={15} skew={-3} />
    <path d="M0 272 L10 275 L12 330 L0 336Z" fill="#c69f88" />
    <path d="M140 268 L232 245 L242 262 L148 282Z" fill="#8b898d" />
    <path d="M128 282 L142 268 L150 284 L150 320 L138 312Z" fill="#cdc8c1" />
    <path d="M146 281 L241 262 L241 300 L146 322Z" fill="#e7e3dd" />
    {[158, 183, 208, 230].map((x) => (
      <path key={x} d={`M${x} ${312 - x * 0.2} l9 -2 v18 l-9 2z`} fill="#a5783f" />
    ))}
    <Facade x={152} y={286} cols={6} rows={2} dx={15} dy={16} skew={-3} />
    <path d="M168 222 L178 224 L164 274 L156 272Z" fill="#4d68a5" opacity={0.85} />

    {/* corner shop */}
    <path d="M240 228 L270 215 L310 228 L318 240 L280 256 L248 250Z" fill="#8a8a92" />
    <path d="M236 250 L280 256 L288 300 L250 282Z" fill="#5a4137" />
    <path d="M280 256 L318 238 L317 268 L290 298 L286 296Z" fill="#c0946b" />
    <path d="M290 284 L318 266 L318 276 L292 298Z" fill="#3c4f74" />
    <path d="M279 256 L286 254 L286 294 L280 292Z" fill="#e6e2dc" />
    <path d="M241 298 L276 294 L280 304 L244 316Z" fill="#e4e0d6" />
    <path d="M243 286 L262 282 L274 294 L242 300Z" fill="#a6a3a0" />
    <Facade x={292} y={254} cols={3} rows={1} dx={8} dy={10} skew={-4} />

    {/* construction site */}
    <path d="M0 392 L100 355 L225 332 L240 420 L255 450 H0Z" fill="#b8b2ac" />
    <Rubble />
    <path d="M50 395 L68 395 L66 410 L50 408Z" fill="#8b4c38" />
    <path d="M168 395 L205 385 L208 360 L228 365 L248 400 L254 430 L190 432 L170 412Z" fill="#dcb347" />
    <path d="M180 398 L205 392 M185 408 L225 398 M190 420 L245 410 M212 366 L222 425 M228 372 L240 425" stroke="#f4d26c" strokeWidth={3} />
    <Chips seed={97} n={70} x={178} y={386} w={66} h={42} angle={-12} size={7} colors={["#8b7f63", "#f0d98c", "#c69a2c", "#b9b2a4"]} opacity={0.8} />
    <path d="M196 405 h12 v10 h-12z M218 402 h10 v6 h-10z" fill="#6e685f" />
    <path d="M190 434 L254 430 L252 450 H196Z" fill="#8e8477" />
    <Chips seed={98} n={50} x={185} y={430} w={66} h={20} angle={-4} size={9} colors={["#d5cfc6", "#5c5248", "#b7a78e"]} opacity={0.8} />
    <g stroke="#4b61a0" strokeWidth={3} fill="none">
      <path d="M132 335 L106 392 M113 392 L110 415 M88 415 L78 438 M96 422 V450 M106 422 V450" />
      <path d="M96 426 H106 M96 434 H106 M96 442 H106" strokeWidth={1.500} />
    </g>
    <ellipse cx={124} cy={407} rx={11} ry={9} fill="#e9edf4" />
    <path d="M0 372 L12 366 L8 378 L0 382Z" fill="#c52631" />
    <path d="M52 338 L76 334 L80 346 L54 350Z" fill="#707076" />

    {/* north side of St Augustine's Road */}
    <path d="M440 0 L500 0 L486 20 L492 80 L450 40Z" fill="#69676c" />
    <path d="M500 0 L600 0 L575 32 L560 20Z" fill="#655c5c" />
    <path d="M486 14 L502 0 L574 30 L530 62 L526 64Z" fill="#8b8d9d" />
    <path d="M520 18 L548 28 L528 50 L506 36Z" fill="#b7bcc9" />
    <path d="M524 20 L510 36 M533 23 L518 42 M541 26 L525 47" stroke="#7d8293" strokeWidth={1} />
    <path d="M486 14 L526 64 L524 105 L510 98 L505 60 L486 45Z" fill="#8a6844" />
    <path d="M486 14 L526 64 L525 72 L486 28Z" fill="#6a6674" />
    <path d="M526 64 L574 30 L577 80 L560 92 L525 106Z" fill="#dedddb" />
    <Facade x={532} y={66} cols={4} rows={2} dx={10} dy={18} skew={-5} />
    <path d="M575 32 L600 2 L622 0 L632 22 L625 46 L600 48 L582 70Z" fill="#d9d7d2" />
    <Facade x={588} y={20} cols={3} rows={2} dx={11} dy={14} skew={-3} />
    <path d="M622 26 L645 50 L640 56 L618 34Z" fill="#b9b1a5" />
    <path d="M608 46 L628 42 L624 58 L610 56Z" fill="#2a7fb2" />
    <path d="M636 10 L645 0 L650 18 L632 22Z" fill="#cfe0e0" />

    {/* houses between the two roads */}
    <path d="M758 52 L790 34 L822 60 L795 74Z" fill="#b26755" />
    <path d="M772 52 l10 -6 l6 8 l-10 8z M796 48 l8 -5 l8 12 l-9 6z" fill="#4d4d6b" />
    <path d="M758 52 L795 74 L794 96 L762 74Z" fill="#93765a" />
    <path d="M795 74 L822 60 L822 100 L800 108 L794 96Z" fill="#c2a583" />
    <Facade x={800} y={84} cols={2} rows={1} dx={10} dy={10} skew={-4} />
    <path d="M790 34 L800 16 L821 22 L822 60Z" fill="#7f7269" />
    <path d="M736 70 L770 68 L787 96 L770 112Z" fill="#8c97a0" />
    <path d="M702 106 L728 86 L768 108 L742 128Z" fill="#9a8078" />
    <path d="M728 86 L736 110 L742 128 M736 110 L768 108" stroke="#b8a49c" strokeWidth={0.8} fill="none" />
    <path d="M702 106 L742 128 L740 150 L706 126Z" fill="#8a6e52" />
    <path d="M742 128 L768 108 L786 100 L788 124 L760 145 L740 150Z" fill="#b79c7c" />
    <Facade x={746} y={130} cols={3} rows={1} dx={12} dy={10} skew={-5} />
    <path d="M674 136 L694 120 L732 142 L728 168 L700 160Z" fill="#84848c" />
    <path d="M646 152 L672 132 L700 150 L698 172 L660 160Z" fill="#606a80" />
    <path d="M821 5 L850 0 H892 L884 44 L858 60 L821 40Z" fill="#7f818d" />
    <path d="M850 20 L892 12 L888 50 L850 80Z" fill="#a08767" />
    <path d="M826 90 L842 82 L858 96 L842 108Z" fill="#686a72" />
    <path d="M824 92 L842 108 L856 98 L856 120 L824 128Z" fill="#cfd2d6" />
    <path d="M904 0 L930 0 L940 24 L922 40 L900 24Z" fill="#8e7f6a" />
    <path d="M945 30 l14 -6 l4 12 l-14 6z" fill="#7a9d9a" />

    {/* apartment block */}
    <path d="M562 188 L600 172 L650 160 L680 172 L700 192 L697 212 L576 214Z" fill="#838892" />
    <path d="M576 196 L676 186 L682 200 L590 210Z" fill="#56586e" />
    <path d="M600 180 L655 170 M618 170 L640 160" stroke="#565773" strokeWidth={8} />
    <path d="M605 212 L672 206" stroke="#63969a" strokeWidth={6} strokeDasharray="8 2" />
    <path d="M562 190 L577 214 L578 256 L560 250 L556 215Z" fill="#33374b" />
    <path d="M557 222 L577 228 M557 232 L577 239 M559 243 L577 249" stroke="#6b6f86" strokeWidth={1} />
    <path d="M576 214 L698 208 L696 248 L576 257Z" fill="#d0af82" />
    <path d="M646 212 L658 211 L656 251 L644 252Z" fill="#dcc094" />
    <Facade x={595} y={219} cols={3} rows={3} dx={16} dy={12} skew={-1} fill="#3b5d66" />
    <Facade x={662} y={216} cols={2} rows={3} dx={14} dy={12} skew={-1} fill="#3b5d66" />
    <path d="M492 268 L510 244 L545 240 L560 255 L690 246 L690 254 L560 262 L500 272Z" fill="#4f7531" />
    <path d="M520 262 Q530 238 544 246 Q538 262 528 264Z" fill="#82a758" />
    <path d="M500 272 L560 266 L695 254" stroke="#b08e62" strokeWidth={3} fill="none" />
    <path d="M594 264 L612 260 L612 266 L596 270Z" fill="#8f8683" />

    {/* villas on the north side of Agar Grove */}
    <path d="M700 212 L740 192 L762 200 L750 222 L704 222Z" fill="#7c7c82" />
    <path d="M704 222 L752 220 L756 240 L706 240Z" fill="#bda787" />
    <path d="M762 172 L780 160 L812 162 L820 178 L806 185 L762 184Z" fill="#79797f" />
    <path d="M761 184 L806 184 L806 236 L764 238Z" fill="#d5c8a3" />
    <path d="M806 184 L820 178 L822 230 L806 236Z" fill="#8c7658" />
    <Facade x={768} y={190} cols={3} rows={3} dx={14} dy={16} />
    <path d="M821 150 L882 143 L894 168 L888 178 L822 180Z" fill="#94766f" />
    <path d="M852 147 L850 180" stroke="#6f5650" strokeWidth={1} />
    <path d="M822 180 L892 174 L892 202 L826 206Z" fill="#9c7b57" />
    <path d="M824 206 L892 200 L892 230 L830 238Z" fill="#e0dfdd" />
    <Facade x={832} y={184} cols={4} rows={3} dx={15} dy={16} skew={-1} />

    {/* garages and the long estate block */}
    <path d="M922 133 L950 122 L953 134 L928 145Z M954 122 L995 105 L998 116 L960 131Z" fill="#77746f" />
    <path d="M928 146 L954 134 L954 142 L930 152Z M960 131 L998 116 L998 124 L962 138Z" fill="#2d6ba5" />
    <path d="M929 149 L954 138 M961 134 L998 120" stroke="#dce4ea" strokeWidth={7} strokeDasharray="0.8 4" />
    <path d="M1000 92 L1040 90 L1028 140 L1000 145 L992 110Z" fill="#54504d" />
    <path d="M1026 92 L1042 84 L1062 92 L1078 138 L1058 142 L1030 138Z" fill="#8a857d" />
    <path d="M1042 84 L1058 142" stroke="#b1aca3" strokeWidth={1} />
    <path d="M1084 116 L1120 112 L1122 124 L1088 126Z M1142 116 L1188 110 L1190 120 L1144 122Z" fill="#6d6a66" />
    <path d="M1088 127 L1120 124 L1120 133 L1088 135Z M1144 122 L1190 119 L1190 127 L1144 130Z" fill="#24539b" />
    <path d="M1088 131 L1120 128 M1144 126 L1190 123" stroke="#dce4ea" strokeWidth={7} strokeDasharray="0.8 4" />
    <path d="M914 158 L1198 129 L1196 154 L908 181Z" fill="#a3957f" />
    <path d="M914 158 L1198 129" stroke="#c0b49e" strokeWidth={1.500} />
    <path d="M908 181 L1196 154 L1192 184 L908 208Z" fill="#d3b888" />
    <Facade x={916} y={184} cols={18} rows={2} dx={15} dy={12} skew={-1} fill="#585f66" />
    <path d="M978 154 h8 v8 l-4 4 l-4 -4z M1032 148 h8 v8 l-4 4 l-4 -4z M1077 144 h8 v8 l-4 4 l-4 -4z" fill="#6b5348" />
    <path d="M1194 105 L1206 104 L1216 148 L1206 190 L1196 150Z" fill="#2c554e" />
    <path d="M1214 100 L1243 95 V140 L1210 142Z" fill="#82808e" />
    <path d="M1211 150 L1243 148 V182 L1212 184Z" fill="#4ea48e" />
    <path d="M1211 158 h32 M1211 168 h32 M1220 148 v36 M1232 148 v36" stroke="#b4d9cd" strokeWidth={1.500} />
    <path d="M1196 74 L1243 70 V96 L1210 98 L1196 90Z" fill="#989894" />
    <path d="M1182 82 L1191 82 L1192 100 L1183 100Z" fill="#e4e6e8" />
    <path d="M1190 18 L1215 0 H1243 L1232 28 L1226 48 L1190 46Z" fill="#ab8d68" />
    <path d="M1195 0 L1243 0 L1228 24 L1208 14Z" fill="#a57f70" />
    <path d="M1082 0 L1140 0 L1112 12 L1082 14Z" fill="#8f846e" />

    {/* workshops along the southern edge */}
    <path d="M728 408 L815 402 L825 440 L735 450 H728Z" fill="#cfcac2" />
    <path d="M765 415 L800 412 L806 430 L770 434Z" fill="#dedbd6" />
    <path d="M886 412 L928 406 L934 450 H890Z" fill="#72767f" />
    <path d="M960 405 L984 400 L1010 432 L1010 450 H968Z" fill="#626879" />
    <path d="M984 400 L1004 400 L1014 450 H996Z" fill="#9c8d80" />
    <path d="M930 410 h32 v6 h-32z" fill="#2f5a94" />
    <path d="M1034 374 L1112 372 L1112 392 L1036 396Z" fill="#767e8b" />
    <path d="M1036 396 L1076 392 L1078 414 L1036 414Z" fill="#a58660" />
    <Facade x={1041} y={399} cols={3} rows={1} dx={11} dy={8} />
    <path d="M1074 388 L1092 376 L1116 400 L1118 426 L1082 432 L1076 410Z" fill="#5f6374" />
    <path d="M1092 376 L1112 372 L1118 424Z" fill="#737788" />
    <path d="M988 374 L1014 372 L1014 388 L992 390Z" fill="#8c8989" />
    <path d="M946 397 L964 394 L962 404 L948 406Z" fill="#f2f1ee" />
    <path d="M1205 335 L1243 330 V365 L1210 360Z" fill="#9ba1ac" />
    <path d="M1218 370 L1243 366 V450 H1218Z" fill="#9a7560" />
    <path d="M940 352 L962 358 L974 390 L946 392Z" fill="#5b8b3c" />
    <path d="M826 398 L862 394 L864 406 L828 408Z" fill="#9fa4b4" />
    <path d="M735 360 L775 355 L770 405 L740 405Z" fill="#a8857a" opacity={0.7} />
  </g>
);

const villas = [
  { x: 690, y: 288, w: 74, roof: "#6b6972", roof2: "#7c7a82" },
  { x: 771, y: 277, w: 72, roof: "#6f6f78", roof2: "#6b6e80" },
  { x: 848, y: 269, w: 78, roof: "#716e70", roof2: "#858280" },
  { x: 931, y: 260, w: 78, roof: "#716f76", roof2: "#6b7287" },
  { x: 1015, y: 252, w: 74, roof: "#63667c", roof2: "#ab6655" },
  { x: 1094, y: 242, w: 76, roof: "#7d7976", roof2: "#8b8884" },
  { x: 1177, y: 234, w: 78, roof: "#77757a", roof2: "#8a8785" },
];

const AerialMap = () => (
  <MapCanvas viewBox="0 0 1243 450" preserveAspectRatio="xMidYMid slice" role="img" aria-label="Aerial map of St Augustine's Road and Agar Grove">
    <defs>
      <filter id="grain" x="0" y="0" width="100%" height="100%">
        <feTurbulence type="fractalNoise" baseFrequency="0.35" numOctaves={3} seed={11} />
        <feColorMatrix values="0.9 0.9 0 0 -0.360  0.9 0.9 0 0 -0.360  0.9 0.9 0 0 -0.360  0 0 0 0 1" />
      </filter>
      <filter id="rough" filterUnits="userSpaceOnUse" x="0" y="0" width="1243" height="450">
        <feTurbulence type="fractalNoise" baseFrequency="0.2" numOctaves={2} seed={5} result="n" />
        <feDisplacementMap in="SourceGraphic" in2="n" scale={3} xChannelSelector="R" yChannelSelector="G" />
      </filter>
    </defs>
    <rect width={1243} height={450} fill="#8e8679" />
    <g filter="url(#rough)">
      <Terrain />
      {villas.map((v) => <VillaPair key={v.x} {...v} />)}
      {trees.map(([x, y, rx, ry], i) => <Tree key={i} x={x} y={y} rx={rx} ry={ry} />)}
    </g>
    {cars.map(([x, y, a, c, l], i) => <Car key={i} x={x} y={y} a={a} c={c} l={l} />)}
    <Grain width={1243} height={450} filter="url(#grain)" opacity={0.3} />

    {numbers.map(([t, x, y], i) => <MapText key={i} $size={10} x={x} y={y} textAnchor="middle">{t}</MapText>)}
    {streets.map(([t, x, y, a], i) => (
      <MapText key={i} $size={16} $weight={600} x={x} y={y} textAnchor="middle" transform={`rotate(${a} ${x} ${y})`}>{t}</MapText>
    ))}

    <Pin x={166} y={12} color="#a259ff"><circle r={4} fill="none" stroke="#fff" strokeWidth={1.500} /></Pin>
    <Pin x={106} y={140} color="#f58220">
      <path d="M-5 -5 H6 v4 H3.500 q0 3 -3 3 h-2.500 q-3 0 -3 -3z M-5 4 h9 v1.500 h-9z" fill="#fff" />
    </Pin>
    <Pin x={147} y={167} color="#78909c"><circle r={4} fill="#fff" /></Pin>
    <Pin x={871} y={183} color="#78909c"><circle r={4} fill="#fff" /></Pin>
    <Pin x={622} y={211} color="#ea4335"><circle r={4} fill="#fff" /></Pin>
    <Pin x={274} y={269} color="#0d8bf2">
      <path d="M-5 -5 h10 v1.500 h-10z M-5.500 -3 h11 l.500 3 h-12z M-5 0 h1.500 v3 h4 v-3 h4.500 v5 h-1.500 v-4 h-1.500 v4 h-7z" fill="#fff" />
    </Pin>
    <Pin x={662} y={163} color="#a259ff">
      <path d="M-4 -6 h2 v1.500 h1 v-1.500 h2 v1.500 h1 v-1.500 h2 v3.500 l-1.500 1 l.500 4 h1.500 v1.500 h-9 v-1.500 h1.500 l.500 -4 l-1.500 -1z" fill="#fff" />
    </Pin>
    <Pin x={701} y={407} color="#17a673">
      {[0, 72, 144, 216, 288].map((a) => <circle key={a} cx={0} cy={-4} r={2.400} fill="#fff" transform={`rotate(${a})`} />)}
      <circle r={1.500} fill="#17a673" />
    </Pin>
    <circle cx={599} cy={165} r={11} fill="#bfe8cf" stroke="#fff" strokeWidth={1.500} />
    <path d="M601 159 l-5 7 h3 l-1 6 l5 -7 h-3z" fill="#16836b" />
    <BusStop x={615} y={281} />
    <BusStop x={571} y={329} />

    {places.map(([t, x, y, anchor, size, fill]) => (
      <MapText key={t} $size={size || 14} $fill={fill} x={x} y={y} textAnchor={anchor}>{t}</MapText>
    ))}
  </MapCanvas>
);

/* ---------- icons ---------- */

const HouseIcon = () => (
  <svg width="76" height="70" viewBox="0 0 76 70" aria-hidden="true">
    <rect x="58" y="9" width="10" height="20" fill="#e5534b" stroke="#000" strokeWidth="1.500" />
    <rect x="55.500" y="4.500" width="14" height="5" fill="#dfe8e2" stroke="#000" strokeWidth="1.500" />
    <path d="M9 34 L38 10 L67 34 V69 H9Z" fill="#e1e8e2" stroke="#000" strokeWidth="1.500" />
    <path d="M10 34 L38 11 L38 18 L14 37 V68 H10Z" fill="#c5cfc8" />
    <path d="M6 31 L38 7 L70 31" fill="none" stroke="#000" strokeWidth="12" strokeLinecap="round" strokeLinejoin="miter" />
    <path d="M6 31 L38 7 L70 31" fill="none" stroke="#e5534b" strokeWidth="9" strokeLinecap="round" strokeLinejoin="miter" />
    <path d="M4 29 L38 4 L38 8 L6 32Z" fill="#c94740" />
    <circle cx="38" cy="31" r="4" fill="#000" />
    <rect x="18.500" y="45.500" width="17" height="14" fill="#fff" stroke="#000" strokeWidth="1.500" />
    <path d="M27 45.500 V59.500 M18.500 52.500 H35.500" stroke="#000" strokeWidth="1.500" />
    <path d="M18 61.500 H36" stroke="#b9c3bc" strokeWidth="1.500" />
    <rect x="41" y="45.500" width="16" height="23.500" fill="#e5534b" stroke="#000" strokeWidth="1.500" />
    <path d="M54 56 V59" stroke="#000" strokeWidth="1.500" />
    <path d="M8.500 69 H67.500" stroke="#000" strokeWidth="2" />
  </svg>
);

const DirectionsIcon = () => (
  <svg width="18" height="18" viewBox="0 0 18 18" aria-hidden="true">
    <path d="M2 0 L10 8 L7 12 L0 3Z" fill="#b9d3f6" />
    <path d="M6 18 V12 Q6 9 8 7 L12 3 L9 0 H18 V9 L15 6 L11 10 Q10 11 10 13 V18Z" fill="#5a9ae6" />
  </svg>
);

const ClockIcon = () => (
  <svg width="22" height="22" viewBox="0 0 22 22" fill="none" stroke="#1c1c1c" aria-hidden="true">
    <circle cx="10" cy="9.500" r="8.800" strokeWidth="1.800" />
    <path d="M10 4.500 V10 L13.500 12.500" strokeWidth="1.400" />
  </svg>
);

const PoundIcon = () => (
  <svg width="16" height="20" viewBox="0 0 16 20" fill="none" stroke="#1c1c1c" strokeWidth="1.600" aria-hidden="true">
    <path d="M11.500 6 Q11.500 2.500 8.200 2.500 Q4.800 2.500 4.800 6 Q4.800 7 5.500 9 Q7 15 3 17 H10.500 Q12.500 17 12.500 15 M2.500 10 H10" />
  </svg>
);

const LayerPreview = () => (
  <svg width="38" height="38" viewBox="0 0 38 38" aria-hidden="true">
    <g stroke="#dadee0" strokeWidth="2.500" fill="none">
      <path d="M3 0 L16 38 M7 0 L20 38 M0 8 L11 38" />
    </g>
    <path d="M30 0 L12 24 M0 28 L38 22 M18 26 L24 38" stroke="#cadce6" strokeWidth="2" fill="none" />
  </svg>
);

export default function App() {
  return (
    <>
      <GlobalStyle />
      <Frame>
        <Page>
          <Header>
            <HeaderInner>
              <HouseIcon />
              <SiteTitle>SAMPLE UK House Prices: 2018 to 2022</SiteTitle>
            </HeaderInner>
          </Header>

          <Card>
            <MapShadow>
              <MapFrame>
                <AerialMap />
                <PlaceCard>
                  <PlaceInfo>
                    <PlaceName>4</PlaceName>
                    <PlaceAddress>4, 4 St Augustine's Rd, London NW1 9RQ, UK</PlaceAddress>
                    <MapLink href="#map">View larger map</MapLink>
                  </PlaceInfo>
                  <DirectionsLink href="#directions">
                    <DirectionsIcon />
                    Directions
                  </DirectionsLink>
                </PlaceCard>
                <LayerButton aria-label="Show street map"><LayerPreview /></LayerButton>
                <ZoomControls>
                  <ZoomButton aria-label="Zoom in">
                    <svg width="18" height="18" viewBox="0 0 18 18"><path d="M7 0 h4 v7 h7 v4 h-7 v7 h-4 v-7 h-7 v-4 h7z" fill="#666" /></svg>
                  </ZoomButton>
                  <ZoomDivider />
                  <ZoomButton aria-label="Zoom out">
                    <svg width="18" height="18" viewBox="0 0 18 18"><path d="M0 7 h18 v4 h-18z" fill="#666" /></svg>
                  </ZoomButton>
                </ZoomControls>
                <GoogleMark>Google</GoogleMark>
                <Attribution>
                  <AttributionItem><AttributionButton>Keyboard shortcuts</AttributionButton></AttributionItem>
                  <AttributionItem>Map data ©2024 Imagery ©2024 Airbus, Maxar Technologies</AttributionItem>
                  <AttributionItem><AttributionLink href="#terms">Terms</AttributionLink></AttributionItem>
                  <AttributionItem><AttributionLink href="#report">Report a map error</AttributionLink></AttributionItem>
                </Attribution>
              </MapFrame>
            </MapShadow>

            <Details>
              <Address>BELVEDERE HOUSE, 4 FLAT 4 ST AUGUSTINE'S ROAD,</Address>
              <Area>LONDON, CAMDEN, GREATER LONDON</Area>
              <Kind>Flat</Kind>
              <Fact>
                <FactIcon><PoundIcon /></FactIcon>
                Price<FactValue>£950,000</FactValue>
              </Fact>
              <Fact>
                <FactIcon><ClockIcon /></FactIcon>
                Date sold<FactValue>2022-08-03</FactValue>
              </Fact>
              <Fact $color="#1b5e20">Well-established property</Fact>

              <TableBox>
                <HeadTable>
                  <thead>
                    <tr>
                      <HeadCell $width={150}>Date Sold</HeadCell>
                      <HeadCell $width={600}>Full Address</HeadCell>
                      <HeadCell $width={150}>Price Sold</HeadCell>
                      <HeadCell>Type</HeadCell>
                    </tr>
                  </thead>
                </HeadTable>
                <TableBody>
                  <Row><DetailButton aria-label="View details" /></Row>
                  <InnerScrollbar aria-hidden="true">
                    <ArrowBox><Arrow $up $color="#a3a3a3" /></ArrowBox>
                  </InnerScrollbar>
                </TableBody>
              </TableBox>
            </Details>
          </Card>
        </Page>

        <Scrollbar aria-hidden="true">
          <ArrowBox><Arrow $up $color="#8a8a8a" /></ArrowBox>
          <ScrollTrack><ScrollThumb /></ScrollTrack>
          <ArrowBox><Arrow $color="#fff" /></ArrowBox>
        </Scrollbar>
      </Frame>
    </>
  );
}
